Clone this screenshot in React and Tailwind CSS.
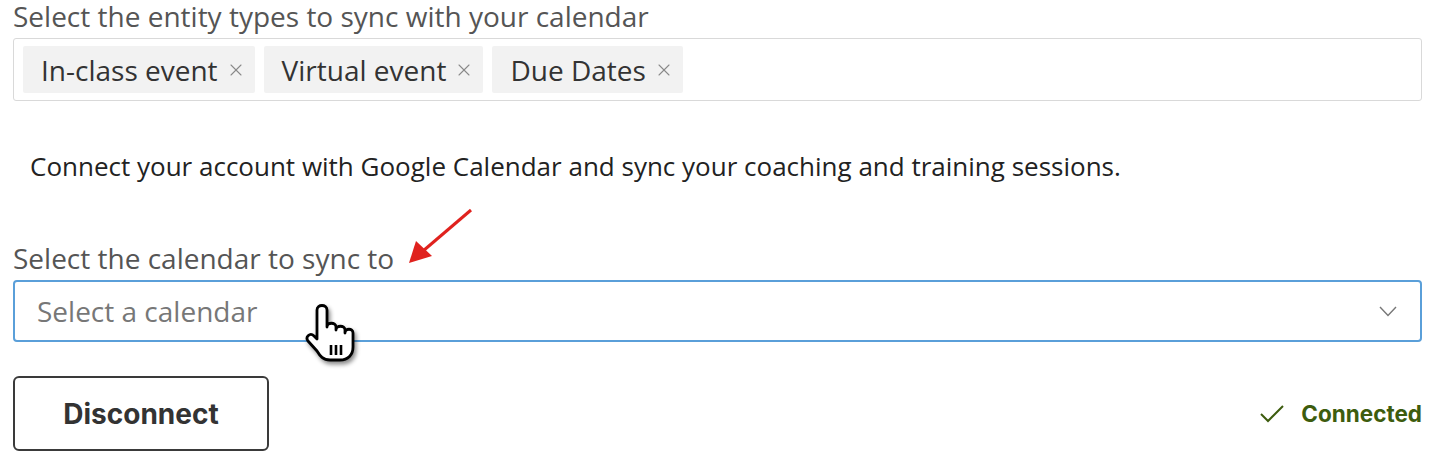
import { X } from 'lucide-react';

const tags = ['In-class event', 'Virtual event', 'Due Dates'];

function Hand() {
  return (
    <svg width="54" height="62" viewBox="0 0 54 62" className="absolute left-[305px] top-[303px] drop-shadow-[2px_3px_2px_rgba(0,0,0,0.45)]">
      <path
        d="M12 36 L12 7 C12 1 22 1 22 7 L22 24 C22 19 31 19 31 24 L31 27 C31 22 40 22 40 27 L40 30 C40 25 48 25 48 30 L48 44 C48 52 43 57 35 57 L25 57 C18 57 15 53 12 48 L3 38 C0 34 5 29 9 33 Z"
        fill="#fff"
        stroke="#000"
        strokeWidth="2.8"
        strokeLinejoin="round"
      />
      <path d="M26 42 L26 52 M31 42 L31 52 M36 42 L36 52" stroke="#000" strokeWidth="2.6" />
    </svg>
  );
}

export default function App() {
  return (
    <div className="relative w-[1430px] h-[463px] bg-white pl-[13px] pr-[8px] font-['Open_Sans',sans-serif]">
      <div className="text-[28px] leading-[32px] text-[#555]">Select the entity types to sync with your calendar</div>
      <div className="mt-[6px] h-[63px] border border-[#d9d9d9] rounded-[3px] pl-[9px] py-[7px] flex gap-[9px]">
        {tags.map(t => (
          <div key={t} className="h-[47px] bg-[#f2f2f2] rounded-[2px] pl-[18px] pr-[9px] flex items-center gap-[8px] text-[28px] text-[#333]">
            <span>{t}</span>
            <X size={20} strokeWidth={1.3} color="#8a8a8a" />
          </div>
        ))}
      </div>

      <p className="mt-[49px] pl-[17px] text-[26px] leading-[32px] text-[#222]">
        Connect your account with Google Calendar and sync your coaching and training sessions.
      </p>

      <div className="mt-[60px] text-[28px] leading-[32px] text-[#555]">Select the calendar to sync to</div>
      <div className="mt-[6px] h-[62px] border-2 border-[#5a9fd9] rounded-[4px] pl-[22px] pr-[23px] flex items-center justify-between">
        <span className="text-[28px] text-[#777]">Select a calendar</span>
        <svg width="18" height="11" viewBox="0 0 18 11">
          <path d="M1 1 L9 9.5 L17 1" fill="none" stroke="#777" strokeWidth="1.4" />
        </svg>
      </div>

      <div className="mt-[34px] flex items-center justify-between">
        <button className="w-[256px] h-[75px] border-2 border-[#3a3a3a] rounded-[6px] font-['Inter',sans-serif] font-bold text-[28px] text-[#333]">
          Disconnect
        </button>
        <div className="flex items-center gap-[17px] font-['Inter',sans-serif] font-bold text-[22.5px] text-[#3d5c0e]">
          <svg width="24" height="18" viewBox="0 0 24 18">
            <path d="M1 9 L8 16 L23 1" fill="none" stroke="#3d5c0e" strokeWidth="2" />
          </svg>
          <span>Connected</span>
        </div>
      </div>

      <svg width="70" height="60" viewBox="0 0 70 60" className="absolute left-[405px] top-[206px]">
        <line x1="66" y1="4" x2="18" y2="45" stroke="#e0221e" strokeWidth="3" />
        <path d="M4 57 L11 35 L27 50 Z" fill="#e0221e" />
      </svg>
      <Hand />
    </div>
  );
}
